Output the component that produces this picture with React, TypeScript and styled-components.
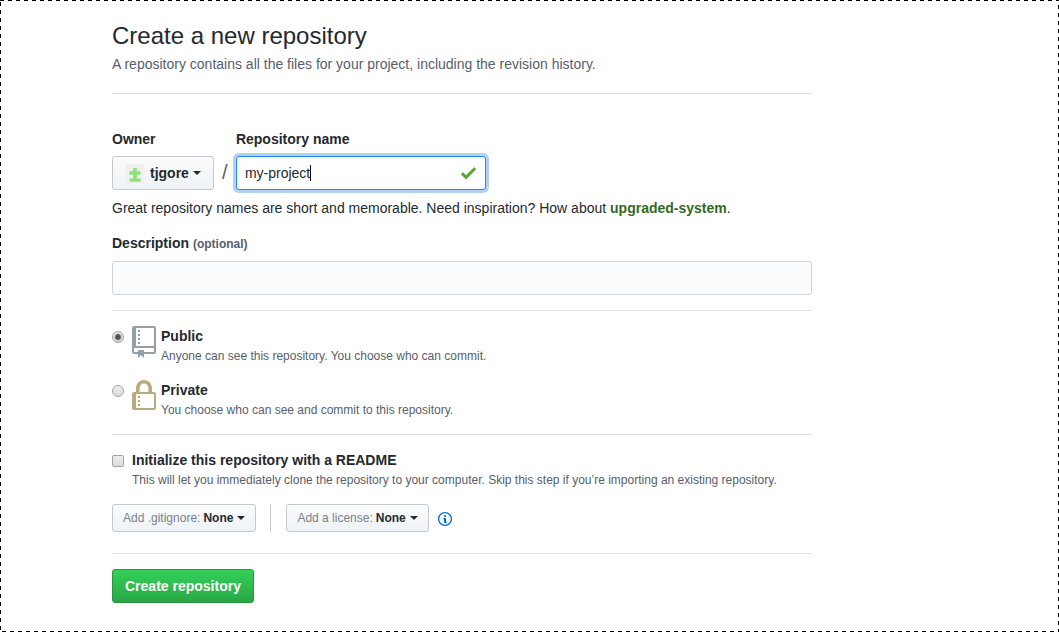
import React from 'react';
import styled, { createGlobalStyle, css } from 'styled-components';

const GlobalStyle = createGlobalStyle`
  *, *::before, *::after { box-sizing: border-box; }
  html, body, #root { height: 100%; }
  body {
    margin: 0;
    background: #fff;
    color: #24292e;
    font: 14px/21px "Liberation Sans", Arial, sans-serif;
  }
  button, input { font: inherit; color: inherit; }
`;

const dash = (direction: string, start = 0) =>
  `repeating-linear-gradient(${direction}, #000 ${start}px ${start + 4}px, transparent ${start + 4}px ${start + 8}px)`;

const Page = styled.main`
  min-height: 100%;
  padding: 18px 112px 29px;
  background:
    ${dash('to right')} top left / 100% 1px no-repeat,
    ${dash('to right', 2)} bottom left / 100% 1px no-repeat,
    ${dash('to bottom', 2)} top left / 1px 100% no-repeat,
    ${dash('to bottom', 5)} top right / 1px 100% no-repeat;
`;

const Form = styled.form`
  max-width: 700px;
`;

const Title = styled.h1`
  margin: 0;
  font-size: 24px;
  line-height: 36px;
  font-weight: 400;
`;

const Lead = styled.p`
  margin: 0;
  color: #586069;
`;

const Section = styled.section<{ $top?: number }>`
  margin-top: ${(p) => p.$top ?? 15}px;
  padding-top: 15px;
  border-top: 1px solid #dfe2e5;
`;

const FieldRow = styled.div`
  display: flex;
  align-items: flex-end;
  padding-top: 20px;
`;

const Field = styled.div`
  display: flex;
  flex-direction: column;
  align-items: flex-start;
  gap: 6px;
`;

const Label = styled.label`
  font-weight: 600;
`;

const Optional = styled.small`
  font-size: 12px;
  color: #586069;
`;

const Button = styled.button<{ $small?: boolean; $primary?: boolean }>`
  display: inline-flex;
  align-items: center;
  height: 34px;
  padding: 0 12px;
  border: 1px solid #c5c9cd;
  border-radius: 3px;
  background: linear-gradient(#fafbfc, #eff3f6);
  font-weight: 600;
  white-space: nowrap;
  cursor: pointer;
  ${(p) => p.$small && css`
    height: 28px;
    padding: 0 10px;
    font-size: 12px;
    line-height: 20px;
  `}
  ${(p) => p.$primary && css`
    border-color: #2a9443;
    background: linear-gradient(#34d058, #28a745);
    color: #fff;
  `}
`;

const Muted = styled.span`
  margin-right: 3px;
  font-weight: 400;
  color: #7c8389;
`;

const Caret = styled.span`
  margin-left: 4px;
  border: 4px solid transparent;
  border-top-color: currentColor;
  border-bottom: 0;
`;

const Avatar = styled.svg`
  width: 20px;
  height: 20px;
  margin-right: 5px;
`;

const Slash = styled.span`
  width: 22px;
  font-size: 20px;
  line-height: 32px;
  padding-bottom: 2px;
  text-align: center;
  color: #586069;
`;

const textBox = css`
  display: block;
  width: 100%;
  height: 34px;
  padding: 6px 8px;
  border: 1px solid #d1d5da;
  border-radius: 3px;
  outline: none;
`;

const DescriptionInput = styled.input`
  ${textBox}
  background: #fafbfc;
`;

const NameInput = styled.input`
  ${textBox}
  border-color: #2188ff;
  background: #fff;
  box-shadow: 0 0 0 3px rgba(3, 102, 214, 0.3);
`;

const NameBox = styled.div`
  position: relative;
  width: 250px;
`;

const ValidMark = styled.svg`
  position: absolute;
  top: 7px;
  right: 10px;
`;

const TextCursor = styled.span`
  position: absolute;
  top: 9px;
  left: 74px;
  width: 1px;
  height: 16px;
  background: #000;
`;

const Hint = styled.p`
  margin: 8px 0 14px;
`;

const Suggestion = styled.a`
  color: #35691f;
  font-weight: 600;
  text-decoration: none;
`;

const Option = styled.div`
  display: flex;
  align-items: flex-start;
  & + & { margin-top: 15px; }
`;

const tick = css`
  appearance: none;
  flex: none;
  width: 12px;
  height: 12px;
  margin: 5px 8px 0 0;
  border: 1px solid #a3a3a3;
  background: linear-gradient(#ededed, #dcdcdc);
`;

const Radio = styled.input.attrs({ type: 'radio' })`
  ${tick}
  border-radius: 50%;
  &:checked {
    background: radial-gradient(circle, #505050 0 2px, transparent 4px), linear-gradient(#ededed, #dcdcdc);
  }
`;

const Checkbox = styled.input.attrs({ type: 'checkbox' })`
  ${tick}
  border-radius: 2px;
  &:checked { background: #505050; }
`;

const OptionIcon = styled.svg<{ $color: string }>`
  flex: none;
  width: 24px;
  height: 32px;
  margin-right: 5px;
  fill: ${(p) => p.$color};
`;

const Note = styled.p`
  margin: 0;
  font-size: 12px;
  line-height: 18px;
  color: #586069;
`;

const Tools = styled.div`
  display: flex;
  align-items: center;
  margin-top: 15px;
  padding-bottom: 6px;
`;

const Divider = styled.span`
  width: 1px;
  height: 28px;
  margin: 0 15px 0 14px;
  background: #c5c9cd;
`;

const InfoLink = styled.a`
  display: flex;
  margin-left: 9px;
  padding-top: 2px;
  color: #0366d6;
`;

export default function App() {
  return (
    <>
      <GlobalStyle />
      <Page>
        <Form onSubmit={(e) => e.preventDefault()}>
          <Title>Create a new repository</Title>
          <Lead>A repository contains all the files for your project, including the revision history.</Lead>

          <Section $top={18}>
            <FieldRow>
              <Field>
                <Label htmlFor="owner">Owner</Label>
                <Button id="owner" type="button" aria-haspopup="menu">
                  <Avatar viewBox="0 0 20 20" aria-hidden="true">
                    <path d="M1 1h18v19H1z" fill="#f0f0f0" />
                    <path d="M8.2 5h3.6v3.2h3.7v3.6h-3.7v3.6h3.7v3.4h-11v-3.4h3.7v-3.6H4.500V8.200h3.700z" fill="#8fdf7c" />
                  </Avatar>
                  tjgore
                  <Caret />
                </Button>
              </Field>
              <Slash>/</Slash>
              <Field>
                <Label htmlFor="name">Repository name</Label>
                <NameBox>
                  <NameInput id="name" type="text" defaultValue="my-project" />
                  <TextCursor />
                  <ValidMark width="15" height="20" viewBox="0 0 12 16" aria-hidden="true">
                    <path fill="#55a532" stroke="#55a532" strokeWidth="0.4" d="M12 5l-8 8-4-4 1.5-1.5L4 10l6.5-6.5L12 5z" />
                  </ValidMark>
                </NameBox>
              </Field>
            </FieldRow>
            <Hint>
              Great repository names are short and memorable. Need inspiration? How about{' '}
              <Suggestion href="#upgraded-system">upgraded-system</Suggestion>.
            </Hint>
            <Field>
              <Label htmlFor="description">
                Description <Optional>(optional)</Optional>
              </Label>
              <DescriptionInput id="description" type="text" />
            </Field>
          </Section>

          <Section>
            <Option>
              <Radio id="public" name="visibility" defaultChecked />
              <OptionIcon viewBox="0 0 12 16" $color="#959da5" aria-hidden="true">
                <path d="M4 9H3V8h1v1zm0-3H3v1h1V6zm0-2H3v1h1V4zm0-2H3v1h1V2zm8-1v12c0 .55-.45 1-1 1H6v2l-1.5-1.5L3 16v-2H1c-.55 0-1-.45-1-1V1c0-.55.45-1 1-1h10c.55 0 1 .45 1 1zm-1 10H1v2h2v-1h3v1h5v-2zm0-10H2v9h9V1z" />
              </OptionIcon>
              <div>
                <Label htmlFor="public">Public</Label>
                <Note>Anyone can see this repository. You choose who can commit.</Note>
              </div>
            </Option>
            <Option>
              <Radio id="private" name="visibility" />
              <OptionIcon viewBox="0 0 12 16" $color="#b8ab7e" aria-hidden="true">
                <path d="M4 13H3v-1h1v1zm8-6v7c0 .55-.45 1-1 1H1c-.55 0-1-.45-1-1V7c0-.55.45-1 1-1h1V4c0-2.2 1.8-4 4-4s4 1.8 4 4v2h1c.55 0 1 .45 1 1zM3.8 6h4.41V4c0-1.22-.98-2.2-2.2-2.2-1.22 0-2.2.98-2.2 2.2v2H3.8zM11 7H2v7h9V7zM4 8H3v1h1V8zm0 2H3v1h1v-1z" />
              </OptionIcon>
              <div>
                <Label htmlFor="private">Private</Label>
                <Note>You choose who can see and commit to this repository.</Note>
              </div>
            </Option>
          </Section>

          <Section>
            <Option>
              <Checkbox id="readme" />
              <div>
                <Label htmlFor="readme">Initialize this repository with a README</Label>
                <Note>
                  This will let you immediately clone the repository to your computer. Skip this step if
                  you’re importing an existing repository.
                </Note>
              </div>
            </Option>
            <Tools>
              <Button $small type="button" aria-haspopup="menu">
                <Muted>Add .gitignore:</Muted>None<Caret />
              </Button>
              <Divider />
              <Button $small type="button" aria-haspopup="menu">
                <Muted>Add a license:</Muted>None<Caret />
              </Button>
              <InfoLink href="#licenses" aria-label="About licenses">
                <svg width="14" height="16" viewBox="0 0 14 16" fill="currentColor" aria-hidden="true">
                  <path d="M6.3 5.69a.942.942 0 0 1-.28-.7c0-.28.09-.52.28-.7.19-.18.42-.28.7-.28.28 0 .52.09.7.28.18.19.28.42.28.7 0 .28-.09.52-.28.7a1 1 0 0 1-.7.3c-.28 0-.52-.11-.7-.3zM8 7.99c-.02-.25-.11-.48-.31-.69-.2-.19-.42-.3-.69-.31H6c-.27.02-.48.13-.69.31-.2.2-.3.44-.31.69h1v3c.02.27.11.5.31.69.2.2.42.31.69.31h1c.27 0 .48-.11.69-.31.2-.19.3-.42.31-.69H8V7.98v.01zM7 2.3c-3.14 0-5.7 2.54-5.7 5.68 0 3.14 2.56 5.7 5.7 5.7s5.7-2.55 5.7-5.7c0-3.15-2.56-5.69-5.7-5.69v.01zM7 .98c3.86 0 7 3.14 7 7s-3.14 7-7 7-7-3.12-7-7 3.14-7 7-7z" />
                </svg>
              </InfoLink>
            </Tools>
          </Section>

          <Section>
            <Button $primary type="submit">Create repository</Button>
          </Section>
        </Form>
      </Page>
    </>
  );
}
